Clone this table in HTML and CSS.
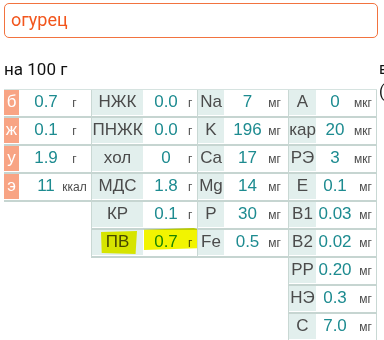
FILE: index.html
```html
<!DOCTYPE html>
<html lang="ru">
<head>
    <meta charset="UTF-8">
    <meta name="viewport" content="width=device-width, initial-scale=1.0">
    <title>огурец</title>
    <link rel="stylesheet" href="styles.css">
</head>
<body>
    <div class="search">
        <input class="search-input" type="text" value="огурец">
    </div>

    <div class="page">
        <div class="main">
            <div class="caption">на 100 г</div>

            <div class="groups">
                <!-- основные -->
                <div class="grp g1">
                    <div class="row"><span class="lab">б</span><span class="num">0.7</span><span class="unit">г</span></div>
                    <div class="row"><span class="lab">ж</span><span class="num">0.1</span><span class="unit">г</span></div>
                    <div class="row"><span class="lab">у</span><span class="num">1.9</span><span class="unit">г</span></div>
                    <div class="row"><span class="lab">э</span><span class="num">11</span><span class="unit">ккал</span></div>
                </div>

                <!-- жиры и прочее -->
                <div class="grp g2">
                    <div class="row"><span class="lab">НЖК</span><span class="num">0.0</span><span class="unit">г</span></div>
                    <div class="row"><span class="lab">ПНЖК</span><span class="num">0.0</span><span class="unit">г</span></div>
                    <div class="row"><span class="lab">хол</span><span class="num">0</span><span class="unit">г</span></div>
                    <div class="row"><span class="lab">МДС</span><span class="num">1.8</span><span class="unit">г</span></div>
                    <div class="row"><span class="lab">КР</span><span class="num">0.1</span><span class="unit">г</span></div>
                    <div class="row marked">
                        <span class="lab">ПВ</span><span class="num">0.7</span><span class="unit">г</span>
                        <span class="mark mark-a"></span>
                        <span class="mark mark-b"></span>
                    </div>
                </div>

                <!-- минералы -->
                <div class="grp g3">
                    <div class="row"><span class="lab">Na</span><span class="num">7</span><span class="unit">мг</span></div>
                    <div class="row"><span class="lab">K</span><span class="num">196</span><span class="unit">мг</span></div>
                    <div class="row"><span class="lab">Ca</span><span class="num">17</span><span class="unit">мг</span></div>
                    <div class="row"><span class="lab">Mg</span><span class="num">14</span><span class="unit">мг</span></div>
                    <div class="row"><span class="lab">P</span><span class="num">30</span><span class="unit">мг</span></div>
                    <div class="row"><span class="lab">Fe</span><span class="num">0.5</span><span class="unit">мг</span></div>
                </div>

                <!-- витамины -->
                <div class="grp g4">
                    <div class="row"><span class="lab">A</span><span class="num">0</span><span class="unit">мкг</span></div>
                    <div class="row"><span class="lab">кар</span><span class="num">20</span><span class="unit">мкг</span></div>
                    <div class="row"><span class="lab">РЭ</span><span class="num">3</span><span class="unit">мкг</span></div>
                    <div class="row"><span class="lab">E</span><span class="num">0.1</span><span class="unit">мг</span></div>
                    <div class="row"><span class="lab">B1</span><span class="num">0.03</span><span class="unit">мг</span></div>
                    <div class="row"><span class="lab">B2</span><span class="num">0.02</span><span class="unit">мг</span></div>
                    <div class="row"><span class="lab">PP</span><span class="num">0.20</span><span class="unit">мг</span></div>
                    <div class="row"><span class="lab">НЭ</span><span class="num">0.3</span><span class="unit">мг</span></div>
                    <div class="row"><span class="lab">C</span><span class="num">7.0</span><span class="unit">мг</span></div>
                </div>
            </div>
        </div>

        <div class="side">
            <div class="caption">в</div>
            <div class="side-note">(</div>
        </div>
    </div>
</body>
</html>
```

FILE: styles.css
```css
* {
    box-sizing: border-box;
    margin: 0;
    padding: 0;
}

body {
    width: 384px;
    height: 340px;
    overflow: hidden;
    background: #ffffff;
    padding: 3px 0 0 4px;
    font-family: 'Liberation Sans', Arial, sans-serif;
}

.search {
    width: 374px;
}

.search-input {
    display: block;
    width: 100%;
    height: 35px;
    border: 1px solid #f2733f;
    border-radius: 5px;
    padding: 0 0 2px 6px;
    font-family: Roboto, sans-serif;
    font-size: 18px;
    color: #f2561d;
    background: #ffffff;
    outline: none;
}

.page {
    display: flex;
    gap: 2px;
}

.main {
    flex: 0 0 373px;
}

.caption {
    font-family: Roboto, sans-serif;
    font-size: 17px;
    color: #111111;
    height: 51px;
    padding-top: 21px;
}

.side {
    flex: 0 0 auto;
    white-space: nowrap;
}

.side .caption {
    font-size: 16px;
}

.side-note {
    font-family: Roboto, sans-serif;
    font-size: 16px;
    margin-top: -7px;
    color: #111111;
}

.groups {
    display: flex;
    align-items: flex-start;
}

.grp {
    display: flex;
    flex-direction: column;
    border-top: 1px solid #d6e3e0;
}

.row {
    display: flex;
    height: 28px;
    border-left: 1px solid #c9d8d4;
    border-bottom: 2px solid #c6d5d1;
    box-shadow: inset 0 -1px 0 #ffffff;
    padding-bottom: 1px;
    font-size: 17px;
    line-height: 24px;
    position: relative;
}

.lab {
    background: #e2efed;
    color: #4b4b4b;
    text-align: center;
}

.num {
    color: #1d8b90;
    text-align: center;
}

.unit {
    font-size: 12px;
    color: #4b4b4b;
    line-height: 26px;
}

/* основные: оранжевые подписи */
.g1 .row {
    border-left: none;
}

.g1 .lab {
    width: 15px;
    background: #f8a484;
    color: #ffffff;
}

.g1 .num {
    width: 43px;
    padding-left: 11px;
}

.g1 .unit {
    width: 29px;
    text-align: center;
    padding-right: 4px;
}

.g2 .lab {
    width: 51px;
}

.g2 .num {
    width: 43px;
    padding-left: 3px;
}

.g2 .unit {
    width: 11px;
    padding-left: 2px;
}

.g3 .lab {
    width: 26px;
}

.g3 .num {
    width: 40px;
    padding-left: 7px;
}

.g3 .unit {
    width: 24px;
    text-align: right;
    padding-right: 7px;
}

.g4 .row {
    border-right: 1px solid #c9d8d4;
}

.g4 .lab {
    width: 27px;
}

.g4 .num {
    width: 36px;
    padding-left: 2px;
}

.g4 .unit {
    width: 24px;
    text-align: right;
    padding-right: 4px;
}

/* маркер поверх строки ПВ */
.mark {
    position: absolute;
    background: #f2f400;
    mix-blend-mode: multiply;
}

.mark-a {
    left: 9px;
    top: 1px;
    width: 36px;
    height: 23px;
    clip-path: polygon(0 4%, 100% 0, 96% 100%, 2% 96%);
}

.mark-b {
    left: 52px;
    top: -2px;
    width: 54px;
    height: 22px;
    clip-path: polygon(0 8%, 92% 0, 100% 6%, 98% 92%, 0 100%);
}
```
